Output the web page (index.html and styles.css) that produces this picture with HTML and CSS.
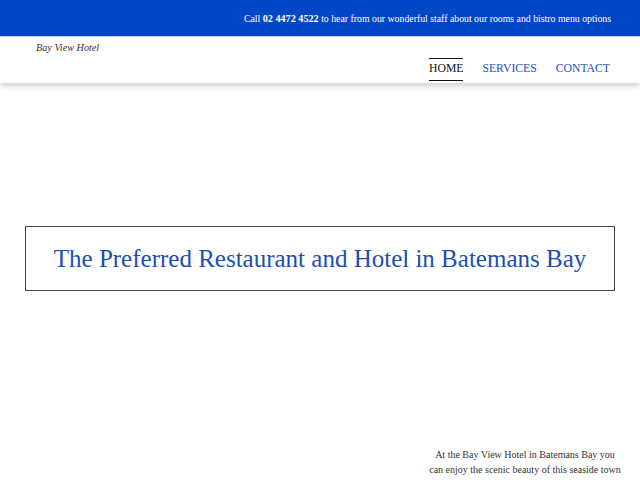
FILE: index.html
```html
<!DOCTYPE html>
<html>
<head>
<meta charset="utf-8">
<link rel="stylesheet" href="styles.css">
</head>
<body>
<div class="topbar"><span class="topbar-text">Call <b>02 4472 4522</b> to hear from our wonderful staff about our rooms and bistro menu options</span></div>
<header class="header">
  <div class="logo">Bay View Hotel</div>
  <nav class="nav">
    <a class="nav-item active">HOME</a>
    <a class="nav-item">SERVICES</a>
    <a class="nav-item">CONTACT</a>
  </nav>
</header>
<main class="main">
  <div class="hero"><h1 class="hero-title">The Preferred Restaurant and Hotel in Batemans Bay</h1></div>
  <div class="intro">
    <p class="intro-text">At the Bay View Hotel in Batemans Bay you<br>can enjoy the scenic beauty of this seaside town</p>
  </div>
</main>
</body>
</html>
```
FILE: styles.css
```css
html, body { margin: 0; padding: 0; background: #fff; }
body { font-family: "Liberation Serif", "Times New Roman", serif; color: #333; width: 640px; height: 480px; overflow: hidden; }
.topbar {
  height: 36px;
  background: #0047c6;
  color: #fff;
  font-size: 9.8px;
  display: flex;
  align-items: center;
  justify-content: flex-end;
  padding-right: 29px;
}
.topbar b { font-weight: bold; font-size: 10.2px; }
.header {
  position: relative;
  height: 47px;
  border-top: 1px solid #b9cdf2;
  box-sizing: border-box;
  box-shadow: 0 3px 6px rgba(0,0,0,0.18);
  display: flex;
  justify-content: space-between;
}
.logo {
  font-style: italic;
  font-size: 10.2px;
  color: #333;
  padding-left: 36px;
  padding-top: 5px;
}
.nav {
  display: flex;
  align-items: flex-start;
  gap: 19px;
  padding-right: 30px;
  padding-top: 21px;
}
.nav-item {
  font-size: 11.7px;
  color: #1c4fb8;
  padding: 4px 0 5px;
  border-top: 1px solid transparent;
  border-bottom: 1px solid transparent;
  line-height: 12px;
}
.nav-item.active {
  color: #111;
  border-top-color: #111;
  border-bottom-color: #111;
}
.main { padding-top: 143px; }
.hero {
  margin: 0 25px 0 25px;
  height: 65px;
  border: 1px solid #444;
  box-sizing: border-box;
  display: flex;
  align-items: center;
  justify-content: center;
}
.hero-title {
  margin: 0;
  font-weight: normal;
  font-size: 25px;
  color: #1a4fb5;
}
.intro {
  display: flex;
  justify-content: flex-end;
  padding-right: 15px;
  padding-top: 156px;
}
.intro-text {
  margin: 0;
  width: 200px;
  white-space: nowrap;
  text-align: center;
  font-size: 10px;
  line-height: 15px;
  color: #333;
}
```
